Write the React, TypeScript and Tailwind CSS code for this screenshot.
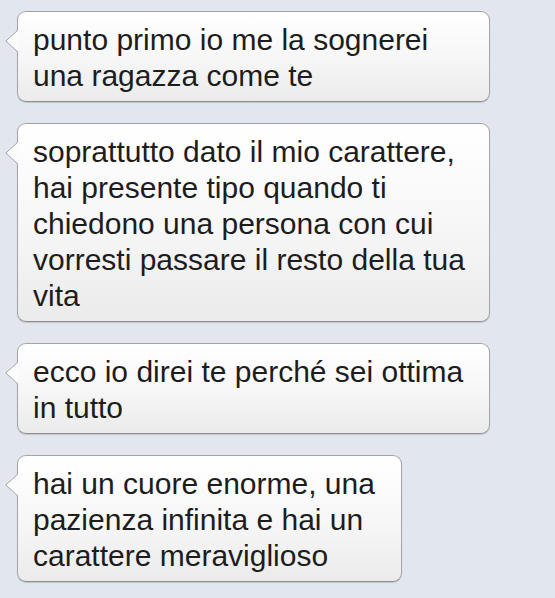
import React from "react";

type Msg = { lines: string[]; w: string };

const messages: Msg[] = [
  { lines: ["punto primo io me la sognerei", "una ragazza come te"], w: "w-[473px]" },
  {
    lines: [
      "soprattutto dato il mio carattere,",
      "hai presente tipo quando ti",
      "chiedono una persona con cui",
      "vorresti passare il resto della tua",
      "vita",
    ],
    w: "w-[473px]",
  },
  { lines: ["ecco io direi te perché sei ottima", "in tutto"], w: "w-[473px]" },
  {
    lines: ["hai un cuore enorme, una", "pazienza infinita e hai un", "carattere meraviglioso"],
    w: "w-[385px]",
  },
];

function Bubble({ m }: { m: Msg }) {
  return (
    <div
      className={`relative ${m.w} rounded-[9px] border border-[#a5a5a5] border-b-[#8f8f8f] bg-gradient-to-b from-[#ffffff] via-[#f7f7f7] to-[#ebebeb] pl-[15px] pr-2 pt-[10px] pb-[7px] shadow-[0_1px_1px_rgba(0,0,0,0.15)]`}
    >
      <svg
        className="absolute left-[-13px] top-[18px]"
        width="13"
        height="22"
        viewBox="0 0 13 22"
      >
        <polygon points="13,0 0.8,11 13,22" fill="#fcfcfc" />
        <polyline points="13,0 0.8,11 13,22" fill="none" stroke="#a5a5a5" strokeWidth="1" />
      </svg>
      <div className="text-[30px] leading-[36px] text-[#1d1d1d] [font-family:'Liberation_Sans',Arial,sans-serif] whitespace-nowrap">
        {m.lines.map((l, i) => (
          <div key={i}>{l}</div>
        ))}
      </div>
    </div>
  );
}

export default function App() {
  return (
    <div className="min-h-[598px] w-[555px] bg-[#e2e6ef] pl-[17px] pt-[11px] flex flex-col gap-[21px]">
      {messages.map((m, i) => (
        <Bubble key={i} m={m} />
      ))}
    </div>
  );
}
